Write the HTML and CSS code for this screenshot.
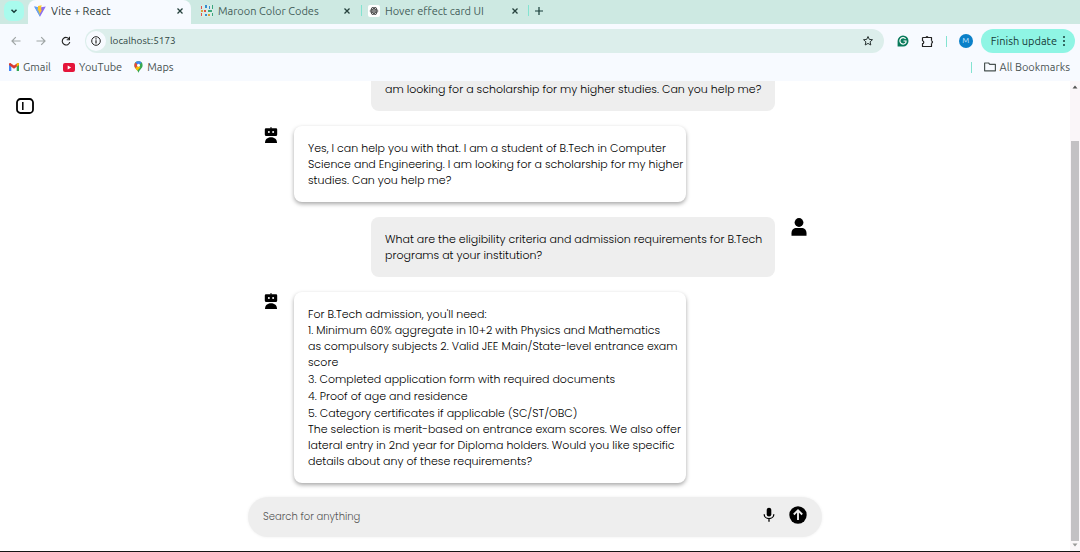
FILE: index.html
```html
<!DOCTYPE html>
<html lang="en">
<head>
<meta charset="utf-8">
<meta name="viewport" content="width=device-width, initial-scale=1">
<title>Vite + React</title>
<link rel="stylesheet" href="styles.css">
</head>
<body>
<svg class="defs" aria-hidden="true">
  <symbol id="close" viewBox="0 0 8 8"><path d="M1.500 1.500l5 5M6.500 1.500l-5 5" stroke="currentColor" stroke-width="1.300"/></symbol>
  <symbol id="bot" viewBox="0 0 14 16"><path d="M6.500 0h1v1.200H12a1.200 1.200 0 0 1 1.200 1.200v5A1.500 1.500 0 0 1 11.700 8.900H2.300A1.500 1.500 0 0 1 .8 7.400v-5A1.200 1.200 0 0 1 2 1.200h4.500z"/><path d="M1 16c0-3.500 2.300-5.700 6-5.700s6 2.200 6 5.700z"/><circle cx="4.900" cy="5" r="1" fill="#fff"/><circle cx="9.100" cy="5" r="1" fill="#fff"/></symbol>
</svg>
<div class="browser">
  <header>
    <div class="tab-strip">
      <button class="tab-search" aria-label="Search tabs"><svg width="8" height="8" viewBox="0 0 8 8"><path d="M1.500 2.800L4 5.300l2.500-2.500" fill="none" stroke="#173c38" stroke-width="1.500"/></svg></button>
      <div class="tab active">
        <svg width="12" height="12" viewBox="0 0 12 12"><path d="M.2 1.500L6 11.700l5.800-10.200L6 2.600z" fill="#8a6df0"/><path d="M.2 1.500L6 11.700V2.600z" fill="#5aa5f5"/><path d="M7.700.2L4 .9l-.3 4.800 1.200-.2-.3 2 1-.3-.5 2.900 3-5-1.200.2.9-1.900-1.100.2z" fill="#ffc52c"/></svg>
        <a href="#">Vite + React</a>
        <button class="tab-close" aria-label="Close tab"><svg width="8" height="8"><use href="#close"/></svg></button>
      </div>
      <div class="tab">
        <svg width="12" height="12" viewBox="0 0 12 12"><path fill="#d8ece6" d="M0 0h12v12H0z"/><path fill="#e0534a" d="M0 1h1v3H0zM3 5h2v2H3zM0 8h1v3H0z"/><path fill="#358fd0" d="M4 0h2v3H4zM8 1h1v3H8zM4 9h2v2H4z"/><path fill="#3aa67d" d="M11 0h1v4h-1zM7 5h4v2H7zM11 8h1v3h-1z"/><path fill="#d9a13c" d="M7 9h2v2H7zM0 5h2v2H0z"/></svg>
        <a href="#">Maroon Color Codes</a>
        <button class="tab-close" aria-label="Close tab"><svg width="8" height="8"><use href="#close"/></svg></button>
      </div>
      <span class="divider"></span>
      <div class="tab narrow">
        <svg width="12" height="12" viewBox="0 0 12 12"><rect width="12" height="12" rx="2" fill="#fff"/><g fill="none" stroke="#444" stroke-width=".8"><ellipse cx="6" cy="6" rx="4" ry="2"/><ellipse cx="6" cy="6" rx="4" ry="2" transform="rotate(60 6 6)"/><ellipse cx="6" cy="6" rx="4" ry="2" transform="rotate(120 6 6)"/><circle cx="6" cy="6" r="1"/></g></svg>
        <a href="#">Hover effect card UI</a>
        <button class="tab-close" aria-label="Close tab"><svg width="8" height="8"><use href="#close"/></svg></button>
      </div>
      <span class="divider"></span>
      <button class="new-tab" aria-label="New tab"><svg width="8" height="8" viewBox="0 0 8 8"><path d="M4 0v8M0 4h8" stroke="#173c38" stroke-width="1.200"/></svg></button>
    </div>
    <div class="toolbar">
      <nav class="history" aria-label="History">
        <button aria-label="Back"><svg width="10" height="10" viewBox="0 0 10 10"><path d="M9.500 5H1M4.800 1.200L1 5l3.800 3.800" fill="none" stroke="#9fa5a5" stroke-width="1.200"/></svg></button>
        <button aria-label="Forward"><svg width="10" height="10" viewBox="0 0 10 10"><path d="M.5 5H9M5.200 1.200L9 5 5.200 8.800" fill="none" stroke="#9fa5a5" stroke-width="1.200"/></svg></button>
        <button aria-label="Reload"><svg width="10" height="10" viewBox="0 0 10 10"><path d="M8.300 3.200A3.800 3.800 0 1 0 8.800 6" fill="none" stroke="#222" stroke-width="1.100"/><path d="M9 .8v3.400H5.700V3.200H8V.8z" fill="#222"/></svg></button>
      </nav>
      <div class="omnibox">
        <button class="site-info" aria-label="Site information"><svg width="10" height="10" viewBox="0 0 10 10"><circle cx="5" cy="5" r="4.300" fill="none" stroke="#222"/><path d="M5 4.300v3.200M5 2.300v1.200" stroke="#222" stroke-width="1.200"/></svg></button>
        <input type="text" value="localhost:5173" aria-label="Address">
        <button aria-label="Bookmark this tab"><svg width="12" height="12" viewBox="0 0 12 12"><path d="M6 1.500l1.300 2.900 3.200.3-2.400 2.100.7 3.200L6 8.400 3.200 10l.7-3.200-2.400-2.100 3.200-.3z" fill="none" stroke="#2a3534"/></svg></button>
      </div>
      <div class="actions">
        <button aria-label="Grammarly"><svg width="12" height="12" viewBox="0 0 12 12"><path d="M6 .5A5.500 5.500 0 1 1 6 11.500H.6V6A5.500 5.500 0 0 1 6 .5z" fill="#087a5b"/><path d="M8.600 3.900A3.200 3.200 0 1 0 9 7.200V6H6.500" fill="none" stroke="#fff" stroke-width="1.200"/></svg></button>
        <button aria-label="Extensions"><svg width="13" height="13" viewBox="0 0 13 13"><path d="M1.500 2.500h9v3.300M10.500 8.200v3.300h-9V8.700c1.700-.2 1.700-2.800 0-3V2.500" fill="none" stroke="#222" stroke-width="1.200" stroke-linejoin="round"/><path d="M4.500 2.500a1.500 1.600 0 0 1 3 0zM10.500 5.500a1.600 1.500 0 0 1 0 3z" fill="#222"/></svg></button>
        <span class="divider"></span>
        <button class="avatar" aria-label="Profile">M</button>
      </div>
      <button class="update">Finish update <svg width="4" height="12" viewBox="0 0 4 12"><g fill="#173c38"><circle cx="2" cy="2" r="1"/><circle cx="2" cy="6" r="1"/><circle cx="2" cy="10" r="1"/></g></svg></button>
    </div>
    <nav class="bookmarks" aria-label="Bookmarks">
      <a href="#"><svg width="10" height="8" viewBox="0 0 10 8"><path d="M0 1.200L2.300 3v5H0z" fill="#4285f4"/><path d="M7.700 3L10 1.200V8H7.700z" fill="#34a853"/><path d="M0 1.200C0 .2 1.200-.2 2 .4l3 2.200L8 .4c.8-.6 2-.2 2 .8v.9L5 5.800 0 2.100z" fill="#d93a31"/><path d="M7.700.6L8 .4c.8-.6 2-.2 2 .8v.9L7.700 3.800z" fill="#fbbc04"/></svg>Gmail</a>
      <a href="#"><svg width="12" height="9" viewBox="0 0 12 9"><rect width="12" height="9" rx="2" fill="#e5153a"/><path d="M4.700 2.500v4l3.400-2z" fill="#fff"/></svg>YouTube</a>
      <a href="#"><svg width="9" height="12" viewBox="0 0 9 12"><path d="M4.500 12C4 9 .4 7.600.4 4.300A4.100 4.100 0 0 1 8.600 4.300C8.600 7.600 5 9 4.500 12z" fill="#34a853"/><path d="M1.400 1.600A4.100 4.100 0 0 1 7.500 1.500L4.500 4.500z" fill="#4285f4"/><path d="M1.400 1.600L4.500 4.500 1.200 7.300C.1 5.500.1 3.200 1.400 1.600z" fill="#e9483b"/><path d="M1.200 7.300l3.300-2.800 1.800 2-3 3.300z" fill="#fbbc04"/><circle cx="4.500" cy="4.300" r="1.500" fill="#fff"/></svg>Maps</a>
      <span class="divider push"></span>
      <a href="#"><svg width="12" height="10" viewBox="0 0 12 10"><path d="M.6 1h4l1.200 1.300h5.600v6.500H.6z" fill="none" stroke="#4a5453" stroke-width="1.200" stroke-linejoin="round"/></svg>All Bookmarks</a>
    </nav>
  </header>

  <div class="viewport">
    <main class="page">
      <button class="sidebar-toggle" aria-label="Open sidebar"><svg width="18" height="16" viewBox="0 0 18 16"><rect x="1" y="1" width="16" height="14" rx="3.500" fill="none" stroke="#000" stroke-width="1.800"/><path d="M6.800 4v8" stroke="#000" stroke-width="1.500"/></svg></button>
      <section class="chat">
        <div class="messages">
          <div class="message user">
            <div class="bubble continued">am looking for a scholarship for my higher studies. Can you help me?</div>
            <span class="user-space"></span>
          </div>
          <div class="message">
            <svg class="face" width="14" height="16"><use href="#bot"/></svg>
            <div class="bubble">Yes, I can help you with that. I am a student of B.Tech in Computer<br>Science and Engineering. I am looking for a scholarship for my higher<br>studies. Can you help me?</div>
          </div>
          <div class="message user">
            <div class="bubble">What are the eligibility criteria and admission requirements for B.Tech<br>programs at your institution?</div>
            <svg class="face" width="16" height="18" viewBox="0 0 16 18"><circle cx="8" cy="4.500" r="4.400"/><path d="M.5 17.800v-2.500c0-3.500 2.200-5.300 5-5.300h5c2.800 0 5 1.800 5 5.300v2.500z"/></svg>
          </div>
          <div class="message">
            <svg class="face" width="14" height="16"><use href="#bot"/></svg>
            <div class="bubble">
              <p>For B.Tech admission, you'll need:</p>
              <ul class="steps">
                <li>1. Minimum 60% aggregate in 10+2 with Physics and Mathematics<br>as compulsory subjects 2. Valid JEE Main/State-level entrance exam<br>score</li>
                <li>3. Completed application form with required documents</li>
                <li>4. Proof of age and residence</li>
                <li>5. Category certificates if applicable (SC/ST/OBC)</li>
              </ul>
              <p>The selection is merit-based on entrance exam scores. We also offer<br>lateral entry in 2nd year for Diploma holders. Would you like specific<br>details about any of these requirements?</p>
            </div>
          </div>
        </div>
        <form class="composer">
          <input type="text" placeholder="Search for anything" aria-label="Search for anything">
          <button type="button" aria-label="Speak"><svg width="12" height="16" viewBox="0 0 12 16"><rect x="3.700" y=".8" width="4.600" height="8.700" rx="2.300"/><path d="M1.200 7.200a4.800 4.500 0 0 0 9.600 0M6 11.500v3.200" fill="none" stroke="#000" stroke-width="1.300"/></svg></button>
          <button type="button" aria-label="Send"><svg width="18" height="18" viewBox="0 0 18 18"><circle cx="9" cy="9" r="8.700"/><path d="M9 14V4.500M4.800 8.500L9 4.300l4.200 4.200" fill="none" stroke="#eee" stroke-width="1.900"/></svg></button>
        </form>
      </section>
    </main>
    <div class="scrollbar" aria-hidden="true">
      <svg width="6" height="4" viewBox="0 0 6 4"><path d="M3 .5L5.500 3.500h-5z" fill="#555"/></svg>
      <span class="track"></span>
      <span class="thumb"></span>
      <svg width="6" height="4" viewBox="0 0 6 4"><path d="M3 3.500L.5.500h5z" fill="#999"/></svg>
    </div>
  </div>
</div>
</body>
</html>
```
FILE: styles.css
```css
* { box-sizing: border-box; }
body { margin: 0; background: #fff; color: #111; font-family: Ubuntu, "Noto Sans", sans-serif; font-size: 11px; line-height: 16px; }
button { display: flex; align-items: center; justify-content: center; padding: 0; border: 0; background: none; color: inherit; font: inherit; }
input { min-width: 0; padding: 0; border: 0; outline: 0; background: none; color: inherit; font: inherit; }
a { color: inherit; text-decoration: none; }
p { margin: 0; }
svg { display: block; flex: none; }
.defs { position: absolute; width: 0; height: 0; }

.browser { display: flex; flex-direction: column; min-height: 100vh; border-bottom: 1px solid #151515; }
.divider { flex: none; width: 1px; height: 11px; background: #83e3d1; }

.tab-strip { display: flex; align-items: center; height: 24px; padding: 0 0 3px 4px; background: #cde9e2; white-space: nowrap; }
.tab-search { width: 20px; height: 20px; margin-right: 4px; border-radius: 7px; background: #a9fbed; }
.tab { display: flex; flex: 0 1 170px; align-items: center; gap: 5px; min-width: 0; height: 21px; padding: 0 10px; color: #45605b; }
.tab.active { flex-basis: 163px; align-self: flex-start; height: 24px; padding: 0 7px 3px 6px; border-radius: 8px 8px 0 0; background: #f7faff; color: #2c3836; }
.tab.narrow { flex-basis: 166px; padding: 0 9px 0 6px; }
.tab a { flex: 1; overflow: hidden; }
.tab-close { width: 8px; color: #25403c; }
.new-tab { width: 20px; height: 20px; }

.toolbar { display: flex; align-items: center; height: 34px; padding: 0 5px 0 11px; background: #f7faff; }
.history { display: flex; gap: 15px; margin-right: 14px; }
.omnibox { display: flex; flex: 1; align-items: center; height: 24px; padding: 0 10px 0 1px; border-radius: 12px; background: #dceeeb; }
.omnibox input { flex: 1; color: #2c4340; font-size: 10px; }
.site-info { width: 20px; height: 20px; margin-right: 4px; border-radius: 50%; background: #f7faff; }
.actions { display: flex; align-items: center; gap: 12px; margin: 0 8px 0 13px; }
.avatar { width: 14px; height: 14px; border-radius: 50%; background: #0b80c8; color: #c9e9ff; font-size: 8px; }
.update { gap: 5px; height: 24px; padding: 0 9px 0 10px; border-radius: 12px; background: #8ff5e4; color: #173c38; }

.bookmarks { display: flex; align-items: center; gap: 12px; height: 23px; padding: 0 10px 5px 9px; background: #f7faff; color: #4a5453; }
.bookmarks a { display: flex; align-items: center; gap: 4px; }
.push { margin-left: auto; }

.viewport { display: flex; flex: 1; }
.page { display: grid; flex: 1; grid-template-columns: 1fr minmax(0, 574px) 1fr; font-family: Poppins, Inter, sans-serif; font-weight: 300; }
.sidebar-toggle { align-self: start; justify-self: start; margin: 17px 0 0 16px; }
.chat { display: flex; flex-direction: column; gap: 14px; padding-bottom: 14px; }
.messages { display: flex; flex-direction: column; gap: 15px; padding: 0 15px 0 16px; }
.message { display: flex; align-items: flex-start; gap: 16px; }
.message.user { justify-content: flex-end; }
.face { margin-top: 1px; }
.user-space { width: 16px; }
.bubble { flex: 0 1 392px; padding: 14px 2px 14px 14px; border-radius: 8px; background: #fff; box-shadow: 0 2px 4px rgb(0 0 0 / 35%); color: #000; }
.user .bubble { flex-basis: 404px; background: #eee; box-shadow: none; }
.user .continued { padding-top: 0; border-radius: 0 0 8px 8px; }
.steps { display: grid; gap: 1px; margin: 0; padding: 0; list-style: none; }

.composer { display: flex; align-items: center; gap: 14px; height: 40px; margin-top: auto; padding: 0 15px; border-radius: 20px; background: #eee; box-shadow: 0 0 3px #eee; }
.composer input { flex: 1; font-size: 10px; }
.composer input::placeholder { color: #555; opacity: 1; }
.composer button { padding-bottom: 5px; }

.scrollbar { display: flex; flex: 0 0 10px; flex-direction: column; align-items: center; padding: 4px 0; background: #faf6f9; }
.track { flex: 0 0 52px; }
.thumb { flex: 1; width: 8px; margin-bottom: 2px; background: #c3c1c4; }
```
